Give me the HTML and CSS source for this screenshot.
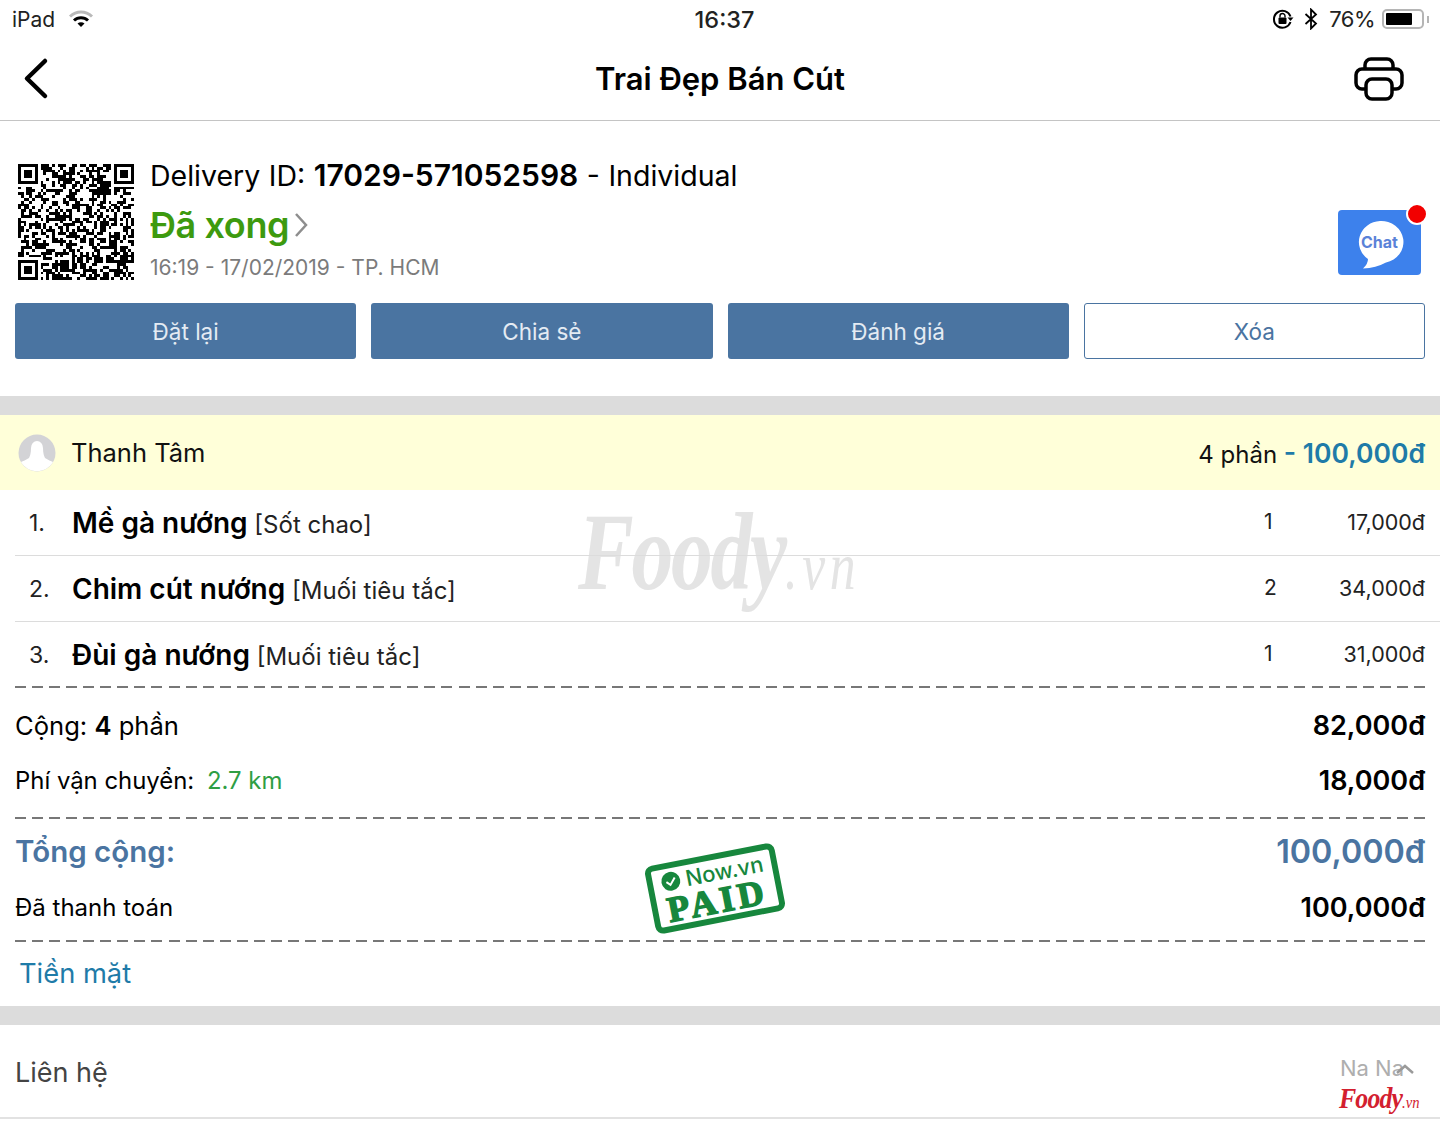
FILE: index.html
```html
<!DOCTYPE html>
<html>
<head>
    <meta charset="utf-8">
    <link rel="stylesheet" href="styles.css">
</head>
<body>
    <div class="page">
        <div class="status-bar">
            <div class="status-left">
                <span>iPad</span>
                <svg class="wifi" width="26" height="20" viewBox="0 0 26 20">
                    <path d="M2 7.500C8.500 1.500 17.500 1.500 24 7.500" fill="none" stroke="#b9b9b9" stroke-width="3"/>
                    <path d="M6 11.500C10 7.800 16 7.800 20 11.500" fill="none" stroke="#000" stroke-width="3"/>
                    <path d="M9.500 14.500C11.500 12.700 14.500 12.700 16.500 14.500L13 18Z" fill="#000"/>
                </svg>
            </div>
            <div class="status-time">16:37</div>
            <div class="status-right">
                <svg width="22" height="22" viewBox="0 0 22 22">
                    <path d="M18.500 8.500A8.500 8.500 0 1 0 18.500 14" fill="none" stroke="#000" stroke-width="2"/>
                    <path d="M15.500 9.500L21.500 9.500L18.500 13Z" fill="#000"/>
                    <rect x="6.500" y="9.500" width="8" height="6.500" rx="1" fill="#000"/>
                    <path d="M8 9.500V8a2.500 2.500 0 0 1 5 0V9.500" fill="none" stroke="#000" stroke-width="1.400"/>
                </svg>
                <svg class="bluetooth" width="14" height="22" viewBox="0 0 14 22">
                    <path d="M1.500 6L12 15.500L7 20.500V1.500L12 6.500L1.500 16" fill="none" stroke="#000" stroke-width="1.800"/>
                </svg>
                <span class="battery-text">76%</span>
                <div class="battery"><div class="battery-fill"></div></div>
                <div class="battery-tip"></div>
            </div>
        </div>

        <div class="nav">
            <svg width="28" height="44" viewBox="0 0 28 44">
                <path d="M24 4L6 21.500L24 39" fill="none" stroke="#000" stroke-width="4.500" stroke-linecap="round" stroke-linejoin="round"/>
            </svg>
            <h1>Trai Đẹp Bán Cút</h1>
            <svg class="nav-print" width="50" height="46" viewBox="0 0 50 46">
                <path d="M11 14V9a6 6 0 0 1 6-6H33a6 6 0 0 1 6 6V14" fill="none" stroke="#000" stroke-width="3.500"/>
                <path d="M12 33H8a6 6 0 0 1-6-6V19a6 6 0 0 1 6-6H42a6 6 0 0 1 6 6V27a6 6 0 0 1-6 6H38" fill="none" stroke="#000" stroke-width="3.500"/>
                <rect x="12" y="23" width="26" height="20" rx="6" fill="#fff" stroke="#000" stroke-width="3.500"/>
            </svg>
        </div>

        <div class="info">
            <div class="info-top">
                <svg id="qr" class="qr" width="116" height="116" viewBox="0 0 41 41" shape-rendering="crispEdges"></svg>
                <div class="info-text">
                    <div class="delivery">Delivery ID: <b>17029-571052598</b> - Individual</div>
                    <div class="state">Đã xong
                        <svg width="14" height="28" viewBox="0 0 14 28">
                            <path d="M2 3L12 14L2 25" fill="none" stroke="#8e8e8e" stroke-width="2.500"/>
                        </svg>
                    </div>
                    <div class="when">16:19 - 17/02/2019 - TP. HCM</div>
                </div>
                <div class="chat">
                    <svg width="48" height="50" viewBox="0 0 48 50">
                        <path d="M24 2a22 21 0 0 1 6 41.500Q20 49 7 49.500Q12 45 12 40A22 21 0 0 1 24 2Z" fill="#fff"/>
                    </svg>
                    <span class="chat-label">Chat</span>
                    <span class="chat-dot"></span>
                </div>
            </div>
            <div class="actions">
                <button class="btn">Đặt lại</button>
                <button class="btn">Chia sẻ</button>
                <button class="btn">Đánh giá</button>
                <button class="btn btn-outline">Xóa</button>
            </div>
        </div>

        <div class="band"></div>

        <div class="person">
            <svg class="avatar" width="38" height="38" viewBox="0 0 38 38">
                <circle cx="19" cy="19" r="18.500" fill="#d3d3d6"/>
                <path d="M13 14a6 7 0 0 1 12 0c0 5 1 8 2 10c3 2 6 3 8 4a18.500 18.500 0 0 1-32 0c2-1 5-2 8-4c1-2 2-5 2-10Z" fill="#fff"/>
            </svg>
            <span class="person-name">Thanh Tâm</span>
            <span class="person-total">4 phần <b>- 100,000đ</b></span>
        </div>

        <div class="order">
            <div class="watermark">Foody<span>.vn</span></div>
            <div class="item">
                <span class="item-no">1.</span>
                <span class="item-name"><b>Mề gà nướng</b> [Sốt chao]</span>
                <span class="item-qty">1</span>
                <span class="item-price">17,000đ</span>
            </div>
            <div class="item">
                <span class="item-no">2.</span>
                <span class="item-name"><b>Chim cút nướng</b> [Muối tiêu tắc]</span>
                <span class="item-qty">2</span>
                <span class="item-price">34,000đ</span>
            </div>
            <div class="item item-last">
                <span class="item-no">3.</span>
                <span class="item-name"><b>Đùi gà nướng</b> [Muối tiêu tắc]</span>
                <span class="item-qty">1</span>
                <span class="item-price">31,000đ</span>
            </div>
        </div>

        <div class="summary">
            <div class="sum-row sum-count">
                <span>Cộng: <b>4</b> phần</span>
                <b>82,000đ</b>
            </div>
            <div class="sum-row sum-ship">
                <span>Phí vận chuyển: <em>2.7 km</em></span>
                <b>18,000đ</b>
            </div>
        </div>

        <div class="summary totals">
            <div class="stamp">
                <div class="stamp-top">
                    <svg width="20" height="20" viewBox="0 0 20 20">
                        <circle cx="10" cy="10" r="9.500" fill="#17873d"/>
                        <path d="M5.500 10L9 13.500L14.500 7" fill="none" stroke="#fff" stroke-width="2"/>
                    </svg>
                    <span>Now.vn</span>
                </div>
                <div class="stamp-paid">PAID</div>
            </div>
            <div class="sum-row total-row">
                <b>Tổng cộng:</b>
                <b class="total-value">100,000đ</b>
            </div>
            <div class="sum-row paid-row">
                <span>Đã thanh toán</span>
                <b>100,000đ</b>
            </div>
        </div>

        <div class="cash">Tiền mặt</div>

        <div class="band"></div>

        <div class="contact">
            <span>Liên hệ</span>
            <div class="contact-name">
                Na Na
                <svg class="chevron" width="20" height="12" viewBox="0 0 20 12">
                    <path d="M2 10L10 3L18 10" fill="none" stroke="#9a9a9a" stroke-width="2.500"/>
                </svg>
            </div>
            <div class="foody-mark">Foody<span>.vn</span></div>
        </div>
    </div>

    <script>
        // fake qr, only needs to look right at this size
        function drawQr() {
            const svg = document.getElementById('qr');
            const size = 41;
            let seed = 17029;
            let d = '';

            function next() {
                seed = (seed * 1103515245 + 12345) % 2147483648;
                return seed / 2147483648;
            }

            function inFinder(x, y) {
                return (x < 8 && y < 8) || (x > 32 && y < 8) || (x < 8 && y > 32);
            }

            for (let y = 0; y < size; y++) {
                for (let x = 0; x < size; x++) {
                    if (!inFinder(x, y) && next() > 0.48) {
                        d += `M${x} ${y}h1v1h-1z`;
                    }
                }
            }

            // the three corner squares
            [[0, 0], [34, 0], [0, 34]].forEach(p => {
                d += `M${p[0]} ${p[1]}h7v7h-7zM${p[0] + 1} ${p[1] + 1}v5h5v-5z`;
                d += `M${p[0] + 2} ${p[1] + 2}h3v3h-3z`;
            });

            svg.innerHTML = `<path d="${d}" fill="#000" fill-rule="evenodd"/>`;
        }

        drawQr();
    </script>
</body>
</html>
```

FILE: styles.css
```css
* {
    box-sizing: border-box;
}
body {
    margin: 0;
    background-color: #fff;
    color: #000;
    font-family: Inter, "Noto Sans", sans-serif;
}
.page {
    width: 1440px;
    height: 1127px;
    overflow: hidden;
}
.status-bar {
    height: 40px;
    padding: 0 11px 2px 12px;
    display: grid;
    grid-template-columns: 1fr auto 1fr;
    align-items: center;
    font-size: 21px;
    color: #222;
}
.status-left {
    display: flex;
    align-items: center;
    gap: 13px;
}
.status-time {
    margin-left: 8px;
    font-weight: 500;
    font-size: 23.5px;
}
.status-right {
    display: flex;
    align-items: center;
    justify-content: flex-end;
}
.bluetooth {
    margin-left: 10px;
}
.battery-text {
    margin-left: 11px;
    font-size: 22px;
    letter-spacing: -0.5px;
}
.battery {
    width: 42px;
    height: 20px;
    margin-left: 7px;
    padding: 2px;
    border: 2px solid #b5b5b5;
    border-radius: 5px;
}
.battery-fill {
    width: 76%;
    height: 100%;
    background-color: #000;
    border-radius: 1px;
}
.battery-tip {
    width: 2px;
    height: 7px;
    margin-left: 3px;
    background-color: #b5b5b5;
}
.nav {
    height: 81px;
    padding: 0 21px 4px;
    display: grid;
    grid-template-columns: 1fr auto 1fr;
    align-items: center;
    border-bottom: 1px solid #c4c4c4;
}
.nav svg {
    margin-top: 2px;
}
.nav h1 {
    margin: 0;
    font-size: 31px;
    font-weight: 600;
}
.nav-print {
    justify-self: end;
    margin-right: 15px;
}
.info {
    height: 275px;
    padding: 0 15px;
}
.info-top {
    height: 182px;
    padding: 43px 0 0 3px;
    display: flex;
    position: relative;
}
.qr {
    flex-shrink: 0;
}
.info-text {
    margin-left: 16px;
}
.delivery {
    margin-top: -7px;
    font-size: 28.5px;
    line-height: 36px;
    word-spacing: 0.5px;
}
.delivery b {
    font-size: 30px;
    font-weight: 600;
}
.state {
    margin-top: 11px;
    display: flex;
    align-items: center;
    gap: 5px;
    color: #3d9a0f;
    font-size: 36px;
    line-height: 40px;
    font-weight: 600;
    letter-spacing: -0.4px;
}
.when {
    margin-top: 10px;
    color: #7b7b7b;
    font-size: 21px;
    line-height: 26px;
}
.chat {
    position: absolute;
    left: 1323px;
    top: 89px;
    width: 83px;
    height: 65px;
    background-color: #3d81ec;
    border-radius: 4px;
}
.chat svg {
    position: absolute;
    left: 18px;
    top: 9px;
}
.chat-label {
    position: absolute;
    left: 0;
    right: 0;
    top: 22px;
    text-align: center;
    color: #5b82d8;
    font-size: 16px;
    line-height: 20px;
    font-weight: 700;
}
.chat-dot {
    position: absolute;
    right: -7px;
    top: -7px;
    width: 22px;
    height: 22px;
    background-color: #f20000;
    border: 2px solid #fff;
    border-radius: 50%;
}
.actions {
    display: grid;
    grid-template-columns: repeat(4, 1fr);
    gap: 15px;
}
.btn {
    height: 56px;
    padding: 0;
    background-color: #4a74a1;
    color: #e4ebf3;
    border: none;
    border-radius: 3px;
    font-family: inherit;
    font-size: 22.5px;
}
.btn-outline {
    background-color: #fff;
    color: #4a74a1;
    border: 1px solid #4a74a1;
}
.band {
    height: 19px;
    background-color: #dcdcdc;
}
.person {
    height: 75px;
    padding: 0 15px 0 18px;
    display: flex;
    align-items: center;
    background-color: #ffffd9;
    font-size: 24px;
    color: #111;
}
.person-name {
    margin-left: 15px;
    flex: 1;
    font-size: 25.5px;
}
.person-total b {
    color: #1f7ba8;
    font-size: 26.5px;
    font-weight: 600;
}
.order {
    position: relative;
    height: 197px;
    padding-left: 15px;
}
.watermark {
    position: absolute;
    left: 578px;
    top: 0;
    color: #e4e4e4;
    font-family: "Liberation Serif", serif;
    font-style: italic;
    font-weight: 700;
    font-size: 110px;
    line-height: 124px;
    letter-spacing: -3px;
    transform: scaleX(0.76);
    transform-origin: left center;
}
.watermark span {
    font-size: 68px;
    font-weight: 400;
    letter-spacing: 6px;
}
.item {
    position: relative;
    height: 66px;
    padding: 0 15px 0 14px;
    display: flex;
    align-items: center;
    border-bottom: 1px solid #dcdcdc;
    font-size: 24px;
}
.item-last {
    height: 65px;
    border-bottom: none;
}
.item-no {
    width: 43px;
    color: #222;
    font-size: 23px;
}
.item-name {
    flex: 1;
    color: #222;
}
.item-name b {
    color: #000;
    font-size: 28px;
    font-weight: 600;
}
.item-qty {
    width: 71px;
    margin-bottom: 2px;
    font-size: 21px;
    color: #222;
}
.item-price {
    width: 90px;
    margin-bottom: 2px;
    text-align: right;
    font-size: 21.5px;
    color: #222;
}
.summary {
    position: relative;
    margin-left: 15px;
    margin-right: 15px;
    margin-top: -1px;
    padding-top: 2px;
    background-image: repeating-linear-gradient(to right, #777 0, #777 11px, transparent 11px, transparent 17.06px);
    background-size: 100% 2px;
    background-repeat: no-repeat;
}
.sum-row {
    display: flex;
    align-items: center;
    justify-content: space-between;
}
.sum-row b {
    font-weight: 600;
}
.sum-count {
    height: 74px;
    font-size: 25.6px;
}
.sum-count > b {
    font-size: 27px;
}
.sum-ship {
    height: 55px;
    padding-bottom: 19px;
    font-size: 23.9px;
}
.sum-ship > b {
    font-size: 27px;
}
.sum-ship em {
    margin-left: 6px;
    color: #2f9e44;
    font-style: normal;
}
.totals {
    margin-top: 0;
    height: 125px;
    background-image: repeating-linear-gradient(to right, #777 0, #777 11px, transparent 11px, transparent 17.06px), repeating-linear-gradient(to right, #777 0, #777 11px, transparent 11px, transparent 17.06px);
    background-size: 100% 2px, 100% 2px;
    background-position: left top, left bottom;
}
.total-row {
    height: 64px;
    color: #4a74a1;
    font-size: 29.5px;
}
.total-value {
    font-size: 32.3px;
}
.paid-row {
    height: 48px;
    font-size: 24px;
}
.paid-row > b {
    font-size: 27px;
}
.stamp {
    position: absolute;
    left: 634px;
    top: 37px;
    width: 132px;
    height: 69px;
    padding-top: 1px;
    border: 6px solid #17873d;
    border-radius: 8px;
    transform: rotate(-11deg);
    color: #17873d;
    text-align: center;
}
.stamp-top {
    display: flex;
    align-items: center;
    justify-content: center;
    gap: 5px;
    font-size: 22px;
    line-height: 24px;
    font-weight: 500;
}
.stamp-paid {
    font-family: "Liberation Serif", serif;
    font-size: 36px;
    line-height: 32px;
    font-weight: 700;
    letter-spacing: 4px;
    -webkit-text-stroke: 1.5px #17873d;
}
.cash {
    height: 64px;
    padding: 0 0 2px 19px;
    display: flex;
    align-items: center;
    color: #1f7ba8;
    font-size: 27.3px;
}
.contact {
    position: relative;
    height: 94px;
    padding: 2px 15px 0;
    display: flex;
    align-items: center;
    border-bottom: 2px solid #e2e2e2;
    color: #444;
    font-size: 27px;
}
.contact-name {
    position: absolute;
    left: 1340px;
    top: 31px;
    color: #aeaeae;
    font-size: 22px;
    line-height: 24px;
}
.chevron {
    position: absolute;
    left: 55px;
    top: 7px;
}
.foody-mark {
    position: absolute;
    left: 1339px;
    top: 58px;
    color: #d3202f;
    font-family: "Liberation Serif", serif;
    font-style: italic;
    font-weight: 700;
    font-size: 30px;
    line-height: 30px;
    letter-spacing: -1px;
    transform: scaleX(0.86);
    transform-origin: left center;
}
.foody-mark span {
    font-size: 17px;
    font-weight: 400;
    letter-spacing: 0;
}
```
